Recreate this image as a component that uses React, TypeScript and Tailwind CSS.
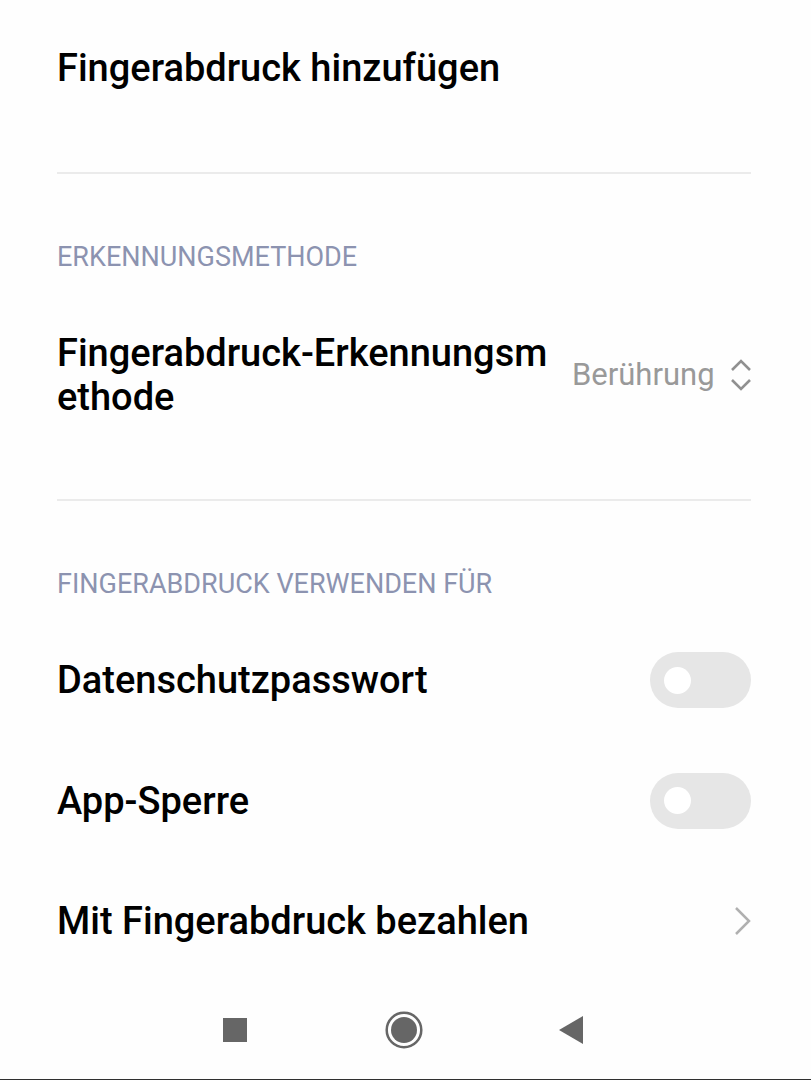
import React from "react";

function Switch() {
  return (
    <span role="switch" aria-checked="false" className="flex h-14 w-[101px] items-center rounded-full bg-[#e6e6e6] pl-[14px]">
      <span className="size-[27px] rounded-full bg-white" />
    </span>
  );
}

export default function App() {
  return (
    <main className="flex h-[1080px] w-[811px] flex-col overflow-hidden border-b border-[#303030] bg-[#fefefe] font-['Roboto',sans-serif] text-[38px] leading-[44px] font-medium text-black">
      <section className="mx-[57px] h-[174px] w-[694px] shrink-0 border-b-2 border-[#ebebeb] pt-[46px]">
        <h1 className="whitespace-nowrap">Fingerabdruck hinzufügen</h1>
      </section>
      <section className="mx-[57px] h-[327px] w-[694px] shrink-0 border-b-2 border-[#ebebeb] pt-[67px]">
        <h2 className="text-[27px] leading-8 font-normal whitespace-nowrap text-[#8c93b0]">ERKENNUNGSMETHODE</h2>
        <div className="mt-[58px] flex h-[88px] items-center">
          <p className="w-[515px] shrink-0 whitespace-nowrap">Fingerabdruck-Erkennungsm<br />ethode</p>
          <span className="w-[158px] shrink-0 text-[31px] font-normal text-[#999999]">Berührung</span>
          <svg className="h-8 w-[22px] shrink-0" viewBox="0 0 22 32" fill="none" stroke="#909090" strokeWidth="2.6">
            <path d="M2 11 11 2l9 9M2 21l9 9 9-9" />
          </svg>
        </div>
      </section>
      <section className="mx-[57px] w-[694px] shrink-0 pt-[67px]">
        <h2 className="text-[27px] leading-8 font-normal whitespace-nowrap text-[#8c93b0]">FINGERABDRUCK VERWENDEN FÜR</h2>
        <div className="mt-5 flex h-[120px] items-center justify-between"><span>Datenschutzpasswort</span><Switch /></div>
        <div className="flex h-[121px] items-center justify-between"><span>App-Sperre</span><Switch /></div>
        <div className="flex h-[120px] items-center justify-between">
          <span>Mit Fingerabdruck bezahlen</span>
          <svg className="h-[30px] w-[17px]" viewBox="0 0 17 30" fill="none" stroke="#b0b0b0" strokeWidth="2.5"><path d="m2 2 13 13L2 28" /></svg>
        </div>
      </section>
      <nav className="ml-[223px] flex h-[98px] items-center">
        <span className="size-6 bg-[#666]" />
        <svg className="ml-[138px] size-[38px]" viewBox="0 0 38 38" fill="none"><circle cx="19" cy="19" r="17.3" stroke="#666" strokeWidth="2.5" /><circle cx="19" cy="19" r="13" fill="#666" /></svg>
        <svg className="ml-[136px] h-7 w-6" viewBox="0 0 24 28"><path d="M24 0v28L0 14Z" fill="#666" /></svg>
      </nav>
    </main>
  );
}
